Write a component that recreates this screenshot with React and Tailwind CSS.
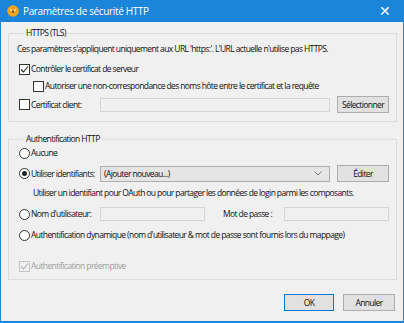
import React from "react";

const Check = ({ checked, disabled }) => (
  <span
    className={
      disabled
        ? "w-[11px] h-[11px] border border-[#c4c4c4] bg-[#f0f0f0] flex items-center justify-center shrink-0"
        : "w-[11px] h-[11px] border border-[#333333] bg-white flex items-center justify-center shrink-0"
    }
  >
    {checked && (
      <svg width="9" height="9" viewBox="0 0 9 9">
        <path d="M1 4.5 L3.5 7 L8 1.5" fill="none" stroke={disabled ? "#b0b0b0" : "#222"} strokeWidth="1.1" />
      </svg>
    )}
  </span>
);

const Radio = ({ checked }) => (
  <span className="w-[11px] h-[11px] rounded-full border border-[#333333] bg-white flex items-center justify-center shrink-0">
    {checked && <span className="w-[5px] h-[5px] rounded-full bg-[#222]" />}
  </span>
);

const Button = ({ children, primary, className }) => (
  <button
    className={
      (primary ? "border-[#0078d7] " : "border-[#adadad] ") +
      "h-[17px] border bg-[#e1e1e1] text-[#111] flex items-center justify-center " +
      className
    }
  >
    {children}
  </button>
);

const App = () => {
  return (
    <div className="w-[404px] h-[323px] bg-[#1a85d9] px-[1px] pb-[2px] flex flex-col font-['Open_Sans',sans-serif] text-[8.5px] leading-[14px] tracking-[-0.6px] text-[#111] whitespace-nowrap">
      {/* Title bar */}
      <div className="h-[22px] flex items-center text-white shrink-0">
        <svg width="12" height="12" viewBox="0 0 12 12" className="ml-[6px]">
          <circle cx="6" cy="6" r="5.8" fill="#f4a21c" />
          <path d="M3 3.5 L6 6 L9 3.5 L9 5 L6 9 L3 5 Z" fill="#fde3a0" />
          <circle cx="6" cy="6.8" r="1.3" fill="#7a4a0a" />
        </svg>
        <span className="ml-[4px] text-[10px] tracking-[-0.35px]">Paramètres de sécurité HTTP</span>
        <span className="ml-auto mr-[12px] text-[14px] leading-none font-light tracking-normal">✕</span>
      </div>

      {/* Body */}
      <div className="flex-1 bg-[#f0f0f0] px-[7px] pt-[4px] flex flex-col">
        <fieldset className="border border-[#dcdcdc] pl-[10px] pr-[7px] pb-[8px]">
          <legend className="ml-[5px] px-[2px]">HTTPS (TLS)</legend>
          <div className="mt-[2px] -ml-[2px]">
            Ces paramètres s'appliquent uniquement aux URL 'https:'. L'URL actuelle n'utilise pas HTTPS.
          </div>
          <div className="mt-[6px] flex items-center gap-[1px]">
            <Check checked />
            <span>Contrôler le certificat de serveur</span>
          </div>
          <div className="mt-[3px] ml-[14px] flex items-center gap-[1px]">
            <Check />
            <span>Autoriser une non-correspondance des noms hôte entre le certificat et la requête</span>
          </div>
          <div className="mt-[3px] h-[17px] flex items-center">
            <Check />
            <span className="ml-[1px] w-[69px]">Certificat client:</span>
            <div className="w-[230px] h-[14px] border border-[#d5d5d5] bg-[#f0f0f0]" />
            <Button className="ml-[7px] w-[52px]">Sélectionner</Button>
          </div>
        </fieldset>

        <fieldset className="mt-[10px] border border-[#dcdcdc] pl-[10px] pr-[7px] pb-[6px]">
          <legend className="ml-[5px] px-[2px]">Authentification HTTP</legend>
          <div className="flex items-center gap-[1px]">
            <Radio />
            <span>Aucune</span>
          </div>
          <div className="mt-[5px] h-[17px] flex items-center">
            <Radio checked />
            <span className="ml-[1px] w-[69px]">Utiliser identifiants:</span>
            <div className="w-[230px] h-[16px] border border-[#adadad] bg-[#e5e5e5] flex items-center pl-[3px]">
              <span className="flex-1">(Ajouter nouveau...)</span>
              <svg width="8" height="5" viewBox="0 0 8 5" className="mr-[7px]">
                <path d="M0.5 0.5 L4 4 L7.5 0.5" fill="none" stroke="#777" strokeWidth="1" />
              </svg>
            </div>
            <Button className="ml-[7px] w-[52px]">Éditer</Button>
          </div>
          <div className="mt-[4px] ml-[14px]">
            Utiliser un identifiant pour OAuth ou pour partager les données de login parmi les composants.
          </div>
          <div className="mt-[7px] h-[14px] flex items-center">
            <Radio />
            <span className="ml-[1px] w-[69px]">Nom d'utilisateur:</span>
            <div className="w-[105px] h-[14px] border border-[#d5d5d5] bg-[#f0f0f0]" />
            <span className="ml-[18px] w-[61px]">Mot de passe :</span>
            <div className="w-[105px] h-[14px] border border-[#d5d5d5] bg-[#f0f0f0]" />
          </div>
          <div className="mt-[7px] flex items-center gap-[1px]">
            <Radio />
            <span>Authentification dynamique (nom d'utilisateur &amp; mot de passe sont fournis lors du mappage)</span>
          </div>
          <div className="mt-[17px] flex items-center gap-[1px] text-[#a0a0a0]">
            <Check checked disabled />
            <span>Authentification préemptive</span>
          </div>
        </fieldset>

        <div className="mt-[14px] flex justify-end gap-[9px] pr-[1px]">
          <Button primary className="w-[50px]">OK</Button>
          <Button className="w-[52px]">Annuler</Button>
        </div>
      </div>
    </div>
  );
};

export default App;
